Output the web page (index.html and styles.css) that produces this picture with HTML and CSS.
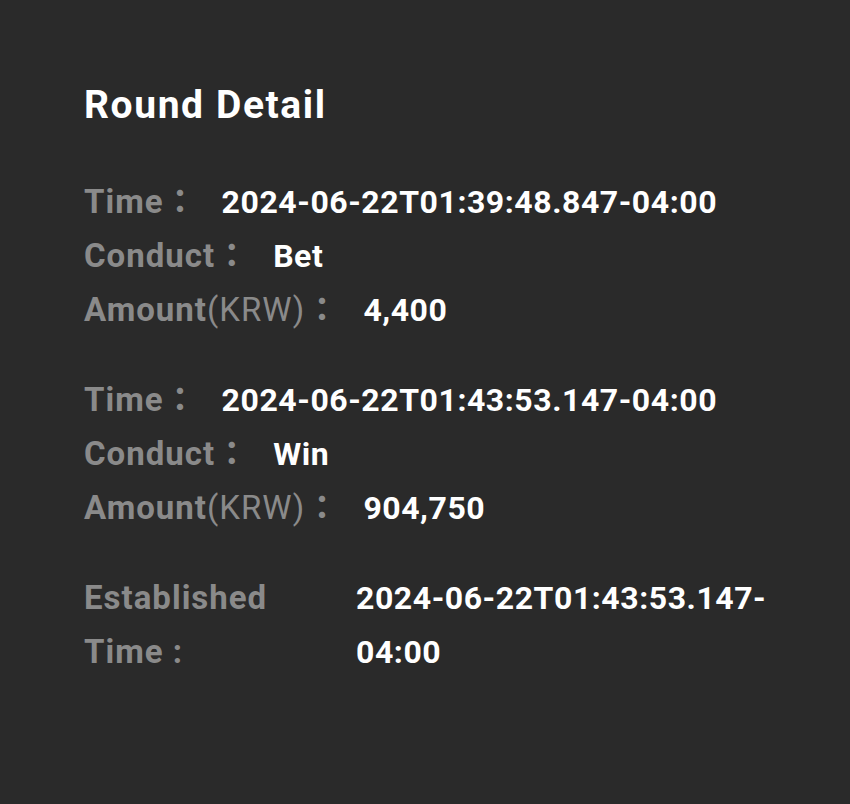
FILE: index.html
```html
<!DOCTYPE html>
<html lang="en">
<head>
    <meta charset="UTF-8">
    <meta name="viewport" content="width=device-width, initial-scale=1.0">
    <title>Round Detail</title>
    <link rel="stylesheet" href="styles.css">
</head>
<body>
    <div class="container">
        <h1>Round Detail</h1>

        <div class="record">
            <div class="row"><span class="label">Time<span class="colon">：</span></span><span class="value">2024-06-22T01:39:48.847-04:00</span></div>
            <div class="row"><span class="label">Conduct<span class="colon">：</span></span><span class="value">Bet</span></div>
            <div class="row"><span class="label">Amount<span class="unit">(KRW)</span><span class="colon">：</span></span><span class="value">4,400</span></div>
        </div>

        <div class="record">
            <div class="row"><span class="label">Time<span class="colon">：</span></span><span class="value">2024-06-22T01:43:53.147-04:00</span></div>
            <div class="row"><span class="label">Conduct<span class="colon">：</span></span><span class="value">Win</span></div>
            <div class="row"><span class="label">Amount<span class="unit">(KRW)</span><span class="colon">：</span></span><span class="value">904,750</span></div>
        </div>

        <div class="established">
            <div class="label">Established Time :</div>
            <div class="value">2024-06-22T01:43:53.147-04:00</div>
        </div>
    </div>
</body>
</html>
```

FILE: styles.css
```css
/* General Styles */
body {
    font-family: Roboto, "Noto Sans CJK JP", sans-serif;
    margin: 0;
    padding: 0;
    background-color: #2a2a2a;
    color: white;
}

.container {
    padding: 82px 60px 40px 84px;
}

h1 {
    margin: 0 0 47px 0;
    font-size: 39px;
    font-weight: bold;
    letter-spacing: 1.6px;
}

/* Records */
.record {
    margin-bottom: 36px;
}

.row {
    display: flex;
    align-items: baseline;
    line-height: 53px;
}

.label {
    color: #8a8a8a;
    font-size: 33px;
    font-weight: bold;
    letter-spacing: 1px;
}

.unit {
    font-weight: normal;
}

.colon {
    font-family: "Noto Sans CJK JP", sans-serif;
    letter-spacing: 0;
    line-height: 1;
}

.value {
    font-size: 32px;
    font-weight: bold;
    letter-spacing: 0.55px;
    margin-left: 25px;
}

/* Established Time */
.established {
    display: grid;
    grid-template-columns: 272px 1fr;
    line-height: 54px;
}

.established .label {
    padding-right: 60px;
}

.established .value {
    margin-left: 0;
}
```
